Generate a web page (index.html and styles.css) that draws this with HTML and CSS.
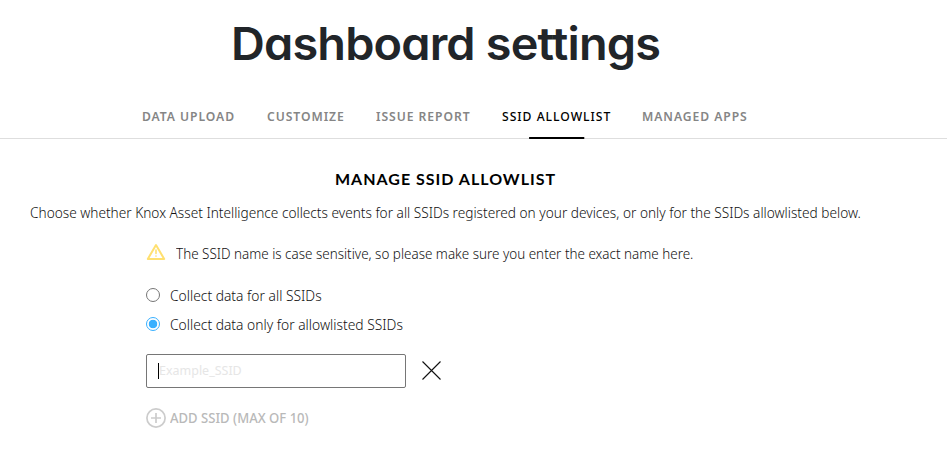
FILE: index.html
```
<!DOCTYPE html>
<html lang="en">
<head>
<meta charset="utf-8">
<title>Dashboard settings</title>
<link rel="stylesheet" href="styles.css">
</head>
<body>
<header>
<h1>Dashboard settings</h1>
<nav class="tabs">
<a class="tab upload">DATA UPLOAD</a>
<a class="tab customize">CUSTOMIZE</a>
<a class="tab report">ISSUE REPORT</a>
<a class="tab active">SSID ALLOWLIST</a>
<a class="tab apps">MANAGED APPS</a>
</nav>
</header>
<main>
<h2>MANAGE SSID ALLOWLIST</h2>
<p class="intro"><span class="copy">Choose whether Knox Asset Intelligence collects events for all SSIDs registered on your devices, or only for the SSIDs allowlisted below.</span></p>
<section class="form">
<div class="notice">
<svg width="20" height="18" viewBox="0 0 20 18" fill="none" stroke="#ffe070" stroke-width="2" stroke-linejoin="round" stroke-linecap="round"><path d="M10 2 18.2 16H1.8Z"/><path stroke-width="1.6" d="M10 7v3.5M10 13v.1"/></svg>
<span class="copy notice-text">The SSID name is case sensitive, so please make sure you enter the exact name here.</span>
</div>
<div class="option"><span class="radio"></span><span class="copy choice">Collect data for all SSIDs</span></div>
<div class="option"><span class="radio checked"></span><span class="copy choice">Collect data only for allowlisted SSIDs</span></div>
<div class="entry">
<div class="field"><span class="caret"></span><span class="placeholder">Example_SSID</span></div>
<svg class="remove" width="19" height="19" viewBox="0 0 19 19" fill="none" stroke="#111" stroke-width="1.1"><path d="M.5.5l18 18M18.5.5l-18 18"/></svg>
</div>
<div class="add">
<svg width="20" height="22" viewBox="0 0 20 22" fill="none" stroke="#ccc" stroke-width="1.7"><circle cx="10" cy="11" r="9.1"/><path d="M10 6v10M5 11h10"/></svg>
<span class="add-text">ADD SSID (MAX OF 10)</span>
</div>
</section>
</main>
</body>
</html>
```
FILE: styles.css
```
* { box-sizing: border-box; }
body { margin: 0; background: #fff; color: #111; font-family: "Noto Sans", sans-serif; font-size: 14px; white-space: nowrap; }
header { height: 139px; border-bottom: 1px solid #dedede; }
h1 { width: 500px; margin: 0 0 0 231px; padding-top: 17px; height: 94px; font: 600 45px/54px Inter, sans-serif; font-feature-settings: "cv11", "calt" 0, "liga" 0; letter-spacing: -0.8px; color: #212529; transform: scaleX(1.041); transform-origin: left; }
.tabs { display: flex; height: 45px; padding-left: 142px; line-height: 44px; font-size: 13px; font-weight: 600; color: #858585; }
.tab { letter-spacing: 1px; transform: scaleX(.935); transform-origin: left; }
.upload { width: 125px; }
.customize { width: 109px; }
.report { width: 126px; }
.active { width: 140px; color: #000; font-weight: 500; letter-spacing: 1.05px; background: linear-gradient(#000, #000) 29px 43px / 59px 2px no-repeat; }
h2 { margin: 0; padding: 28px 0 0 335px; height: 60px; font: 700 16px/24px Lato, sans-serif; letter-spacing: 1px; color: #000; }
.copy { display: inline-block; font-size: 15px; font-weight: 300; transform-origin: left; }
.intro { margin: 0; padding-left: 30px; line-height: 26px; height: 26px; }
.intro .copy { transform: scaleX(.91); }
.form { padding-left: 146px; }
.notice { display: flex; align-items: center; gap: 10px; height: 55px; padding-bottom: 1px; }
.notice-text { padding-top: 2px; transform: scaleX(.8965); }
.option { display: flex; align-items: center; height: 29px; gap: 10px; }
.choice { transform: scaleX(.921); }
.radio { width: 14px; height: 14px; border: 1px solid #767676; border-radius: 50%; }
.radio.checked { border-color: #38b0ff; background: radial-gradient(circle, #38b0ff 0 4px, #fff 4.6px); }
.entry { display: flex; align-items: center; gap: 16px; margin-top: 16px; }
.field { display: flex; align-items: center; width: 260px; height: 34px; border: 1px solid #767676; border-radius: 2px; padding: 0 0 1px 11px; color: #e6e6e6; font-size: 13px; }
.placeholder { margin-top: -1px; transform: scaleX(.96); transform-origin: left; }
.remove { margin-bottom: 1px; }
.caret { width: 1px; height: 16px; background: #000; }
.add { display: flex; align-items: center; gap: 4px; margin-top: 19px; color: #b9b9b9; font-weight: 500; }
.add-text { padding-bottom: 1px; transform: scaleX(.934); transform-origin: left; }
```
